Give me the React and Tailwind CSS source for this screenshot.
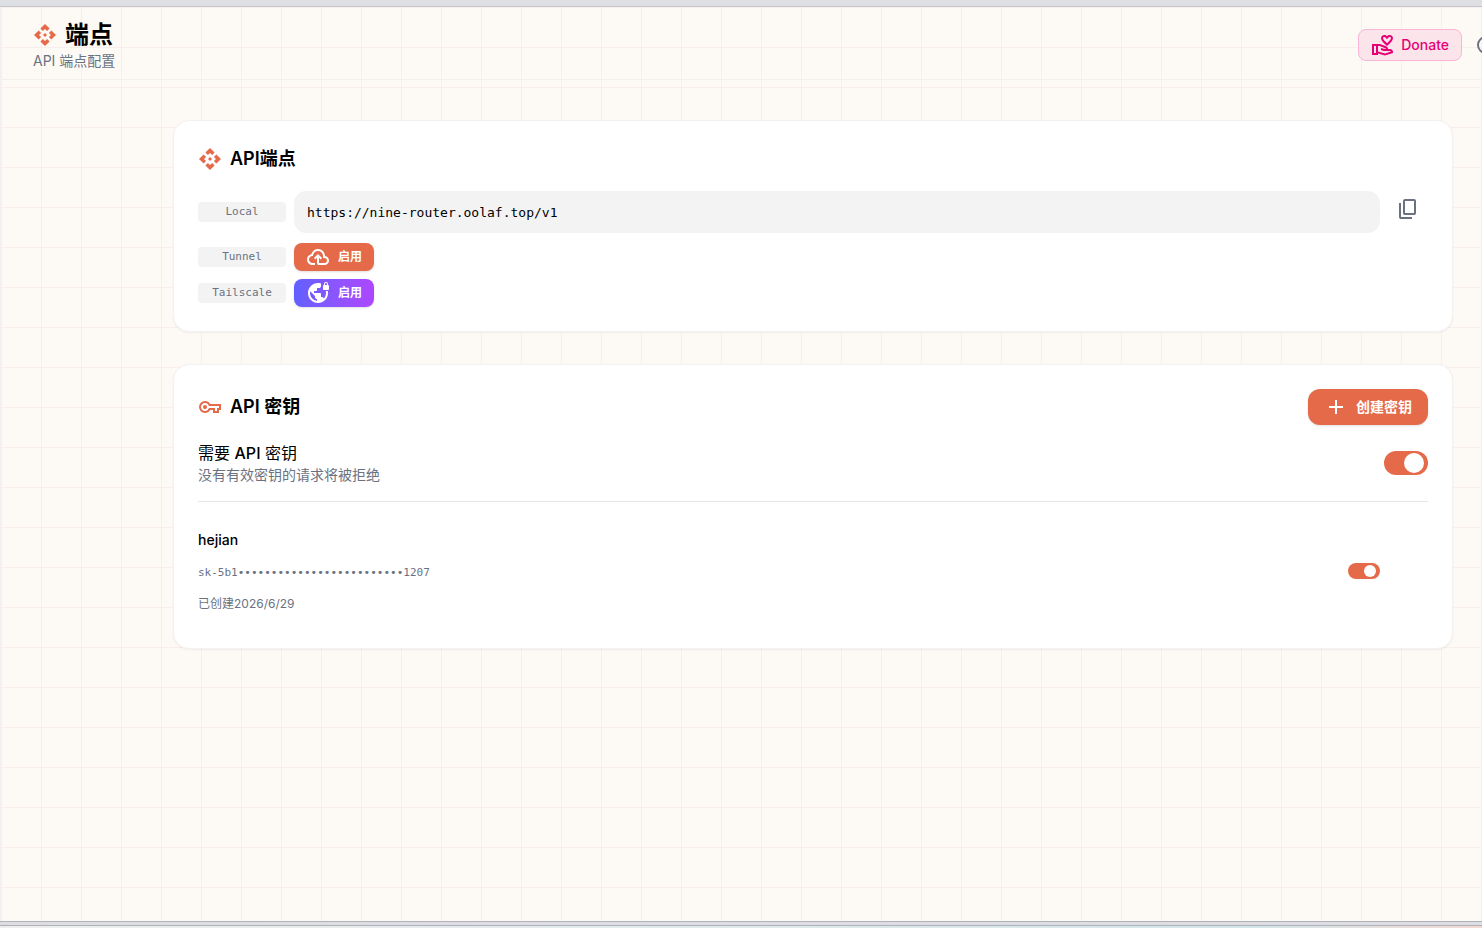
import { useState } from "react";
import { MdApi, MdOutlineVolunteerActivism, MdAdd, MdOutlineDarkMode } from "react-icons/md";

const sans = "font-['Inter','Noto_Sans_CJK_SC',sans-serif]";
const mono = "font-['DejaVu_Sans_Mono','Noto_Sans_CJK_SC',monospace]";

function Symbol({ d, className = "" }) {
  return (
    <svg viewBox="0 -960 960 960" className={`size-6 shrink-0 ${className}`} fill="currentColor" aria-hidden="true">
      <path d={d} />
    </svg>
  );
}

const copyPath =
  "M360-240q-33 0-56.5-23.5T280-320v-480q0-33 23.5-56.5T360-880h360q33 0 56.5 23.5T800-800v480q0 33-23.5 56.5T720-240H360Zm0-80h360v-480H360v480ZM200-80q-33 0-56.5-23.5T120-160v-560h80v560h440v80H200Z";
const cloudUploadPath =
  "M260-160q-91 0-155.5-63T40-377q0-78 47-139t123-78q25-92 100-149t170-57q117 0 198.5 81.5T760-520q69 8 114.5 59.5T920-340q0 75-52.5 127.5T740-160H520q-33 0-56.5-23.5T440-240v-206l-64 62-56-56 160-160 160 160-56 56-64-62v206h220q42 0 71-29t29-71q0-42-29-71t-71-29h-60v-80q0-83-58.5-141.5T480-720q-83 0-141.5 58.5T280-520h-20q-58 0-99 41t-41 99q0 58 41 99t99 41h100v80H260Z";
const vpnKeyPath =
  "M280-400q-33 0-56.5-23.5T200-480q0-33 23.5-56.5T280-560q33 0 56.5 23.5T360-480q0 33-23.5 56.5T280-400Zm0 160q-100 0-170-70T40-480q0-100 70-170t170-70q67 0 121.5 33t86.5 87h432v240h-80v120H600v-120H488q-32 54-86.5 87T280-240Zm0-80q66 0 106-40.5t48-79.5h246v120h80v-120h80v-80H434q-8-39-48-79.5T280-640q-66 0-113 47t-47 113q0 66 47 113t113 47Z";
const vpnLockPath =
  "M480-80q-83 0-156-31.5T197-197q-54-54-85.5-127T80-480q0-83 31.5-156T197-763q54-54 127-85.5T480-880q32 0 62 4.5t58 13.5v102q0 33-23.5 56.5T520-680h-80v80q0 17-11.5 28.5T400-560h-80v80h240q17 0 28.5 11.5T600-440v120h40q26 0 47 15.5t29 40.5q40-44 62-99t22-117q0-20-2.5-40t-7.5-40h82q4 20 6 40t2 40q0 83-31.5 156T763-197q-54 54-127 85.5T480-80Zm-40-82v-78q-33 0-56.5-23.5T360-320v-40L168-552q-3 18-5.5 36t-2.5 36q0 121 79.5 212T440-162ZM720-600q-17 0-28.5-11.5T680-640v-120q0-17 11.5-28.5T720-800v-40q0-33 23.5-56.5T800-920q33 0 56.5 23.5T880-840v40q17 0 28.5 11.5T920-760v120q0 17-11.5 28.5T880-600H720Zm40-200h80v-40q0-17-11.5-28.5T800-880q-17 0-28.5 11.5T760-840v40Z";

function Card({ children }) {
  return (
    <section className="rounded-2xl border border-[#f3f1f1] bg-white p-6 shadow-xs">{children}</section>
  );
}

function Switch({ label, small }) {
  const [on, setOn] = useState(true);
  const size = small ? "h-4 w-8 before:size-3" : "h-6 w-11 before:size-5";
  return (
    <input
      type="checkbox"
      role="switch"
      aria-label={label}
      checked={on}
      onChange={(e) => setOn(e.target.checked)}
      className={`${size} flex shrink-0 cursor-pointer appearance-none items-center rounded-full bg-gray-300 px-1 before:rounded-full before:bg-white before:content-[''] checked:justify-end checked:bg-[#e56a4a]`}
    />
  );
}

function Badge({ children, htmlFor }) {
  const Tag = htmlFor ? "label" : "span";
  return (
    <Tag
      htmlFor={htmlFor}
      className={`${mono} w-22 shrink-0 rounded bg-[#f3f3f3] text-center text-[11px] leading-5 text-gray-500`}
    >
      {children}
    </Tag>
  );
}

export default function App() {
  return (
    <div className={`${sans} flex min-h-screen flex-col bg-[#fdfaf5] text-black`}>
      <div className="h-[7px] border-b border-[#c4c6ce] bg-[#dedfe3]" />
      <div className="flex grow flex-col border-l-2 border-[#f3f0f2] bg-[linear-gradient(to_right,transparent_39px,#f8efec_39px),linear-gradient(to_bottom,#f8efec_1px,transparent_1px)] bg-[size:40px_40px,40px_40px]">
        <header className="flex items-center justify-between overflow-hidden border-b border-[#f3efef] pt-3 pb-2 pl-[31px]">
          <div>
            <div className="flex items-center gap-2">
              <MdApi className="size-6 text-[#e56a4a]" />
              <h1 className="text-2xl font-bold">端点</h1>
            </div>
            <p className="text-sm text-gray-500">API 端点配置</p>
          </div>
          <div className="flex items-center gap-3">
            <button
              type="button"
              className="flex h-8 items-center gap-1.5 rounded-lg border border-[#f9b4d6] bg-[#fce5ea] px-3 text-sm font-medium text-[#e60076]"
            >
              <MdOutlineVolunteerActivism className="size-6" />
              Donate
            </button>
            <button type="button" aria-label="主题" className="flex w-2 overflow-hidden text-gray-500">
              <MdOutlineDarkMode className="size-6 shrink-0" />
            </button>
          </div>
        </header>

        <main className="flex flex-col gap-8 pt-10 pr-[29px] pb-10 pl-[171px]">
          <Card>
            <div className="mb-4 flex items-center gap-2">
              <MdApi className="size-6 text-[#e56a4a]" />
              <h2 className="text-lg leading-7 font-semibold">API端点</h2>
            </div>
            <div className="flex flex-col gap-2">
              <div className="flex items-center gap-2">
                <Badge htmlFor="local-url">Local</Badge>
                <input
                  id="local-url"
                  readOnly
                  value="https://nine-router.oolaf.top/v1"
                  className={`${mono} h-[42px] min-w-0 grow rounded-xl border border-[#f3f3f3] bg-[#f3f3f3] px-3 text-[13px] outline-none`}
                />
                <button type="button" aria-label="复制" className="px-2 pt-2 pb-3.5 text-gray-500">
                  <Symbol d={copyPath} />
                </button>
              </div>
              <div className="flex items-center gap-2">
                <Badge>Tunnel</Badge>
                <button
                  type="button"
                  className="flex h-7 items-center gap-2 rounded-lg bg-[#e56a4a] px-3 text-xs font-bold text-white shadow-sm"
                >
                  <Symbol d={cloudUploadPath} />
                  启用
                </button>
              </div>
              <div className="flex items-center gap-2">
                <Badge>Tailscale</Badge>
                <button
                  type="button"
                  className="flex h-7 items-center gap-2 rounded-lg bg-linear-to-r from-[#615fff] to-[#ad46ff] px-3 text-xs font-bold text-white shadow-sm"
                >
                  <Symbol d={vpnLockPath} />
                  启用
                </button>
              </div>
            </div>
          </Card>

          <Card>
            <div className="mb-4 flex items-center justify-between">
              <div className="flex items-center gap-2">
                <Symbol d={vpnKeyPath} className="text-[#e56a4a]" />
                <h2 className="text-lg leading-7 font-semibold">API 密钥</h2>
              </div>
              <button
                type="button"
                className="flex h-9 items-center gap-2 rounded-xl bg-[#e56a4a] px-4 text-sm font-bold text-white shadow-sm"
              >
                <MdAdd className="size-6" />
                创建密钥
              </button>
            </div>
            <div className="flex items-center justify-between border-b border-gray-200 pb-4">
              <div>
                <p>
                  需要 <span className="font-medium">API</span> 密钥
                </p>
                <p className="text-sm text-gray-500">没有有效密钥的请求将被拒绝</p>
              </div>
              <Switch label="需要 API 密钥" />
            </div>
            <div className="mt-4 flex items-center justify-between py-3">
              <div>
                <p className="text-sm font-medium">hejian</p>
                <p className={`${mono} py-3.5 text-[11px] leading-[18px] text-gray-500`}>
                  sk-5b1•••••••••••••••••••••••••1207
                </p>
                <p className="text-xs text-gray-500">已创建2026/6/29</p>
              </div>
              <div className="mr-12">
                <Switch label="hejian" small />
              </div>
            </div>
          </Card>
        </main>
      </div>
      <div className="h-[5px] border-y border-[#b0b2b9] bg-[#dddde3]" />
      <div className="h-0.5 bg-linear-to-r from-[#eeeeee] via-[#d3e6ea] via-85% to-[#f3d9d3]" />
    </div>
  );
}
